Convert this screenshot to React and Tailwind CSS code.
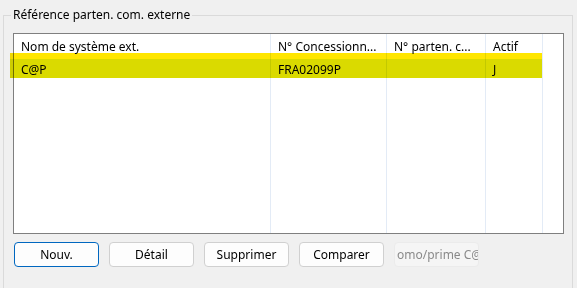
const columns = [
  { title: 'Nom de système ext.', value: 'C@P', width: 'w-[257px]' },
  { title: 'N° Concessionn...', value: 'FRA02099P', width: 'w-[116px]' },
  { title: 'N° parten. c...', value: '', width: 'w-[99px]' },
  { title: 'Actif', value: 'J', width: 'w-[57px]' },
];

const buttons = ['Nouv.', 'Détail', 'Supprimer', 'Comparer'];

export default function App() {
  return (
    <div className="relative w-[577px] h-[288px] overflow-hidden bg-[#f0f0f0] text-[12px] text-black font-['Noto_Sans',sans-serif]">
      <fieldset className="ml-[3px] mt-[7px] w-[570px] h-[300px] border border-[#dadada] pl-[9px]">
        <legend className="-ml-[2px] px-[2px] leading-[16px]">Référence parten. com. externe</legend>

        {/* table */}
        <div className="relative mt-[10px] w-[551px] h-[201px] border border-[#7f7f7f] bg-white flex">
          {columns.map((col) => (
            <div key={col.title} className={`${col.width} h-full border-r border-[#e3ebf6] shrink-0`}>
              <div className="h-[25px] pl-[7px] pt-[1px] flex items-center whitespace-nowrap">{col.title}</div>
              <div className="h-[20px] pl-[7px] pt-[1px] flex items-center whitespace-nowrap">{col.value}</div>
            </div>
          ))}
          <div className="flex-1" />

          {/* highlighter mark over the selected row */}
          <div className="absolute left-[-4px] top-[19px] w-[532px] flex flex-col mix-blend-multiply pointer-events-none">
            <div className="h-[6px] bg-[#ffe600]" />
            <div className="h-[19px] bg-[#dada00]" />
          </div>
        </div>

        {/* buttons */}
        <div className="mt-[8px] ml-[1px] flex gap-[10px]">
          {buttons.map((label, i) => (
            <button
              key={label}
              className={`w-[85px] h-[25px] rounded-[4px] bg-[#fdfdfd] border ${
                i === 0 ? 'border-[#0067c0]' : 'border-[#d0d0d0]'
              }`}
            >
              {label}
            </button>
          ))}
          <div className="w-[85px] h-[25px] rounded-[4px] bg-[#f5f5f5] border border-[#ebebeb] overflow-hidden flex items-center">
            <span className="ml-[2px] whitespace-nowrap text-[#8a8a8a]">omo/prime C@P</span>
          </div>
        </div>
      </fieldset>
    </div>
  );
}
